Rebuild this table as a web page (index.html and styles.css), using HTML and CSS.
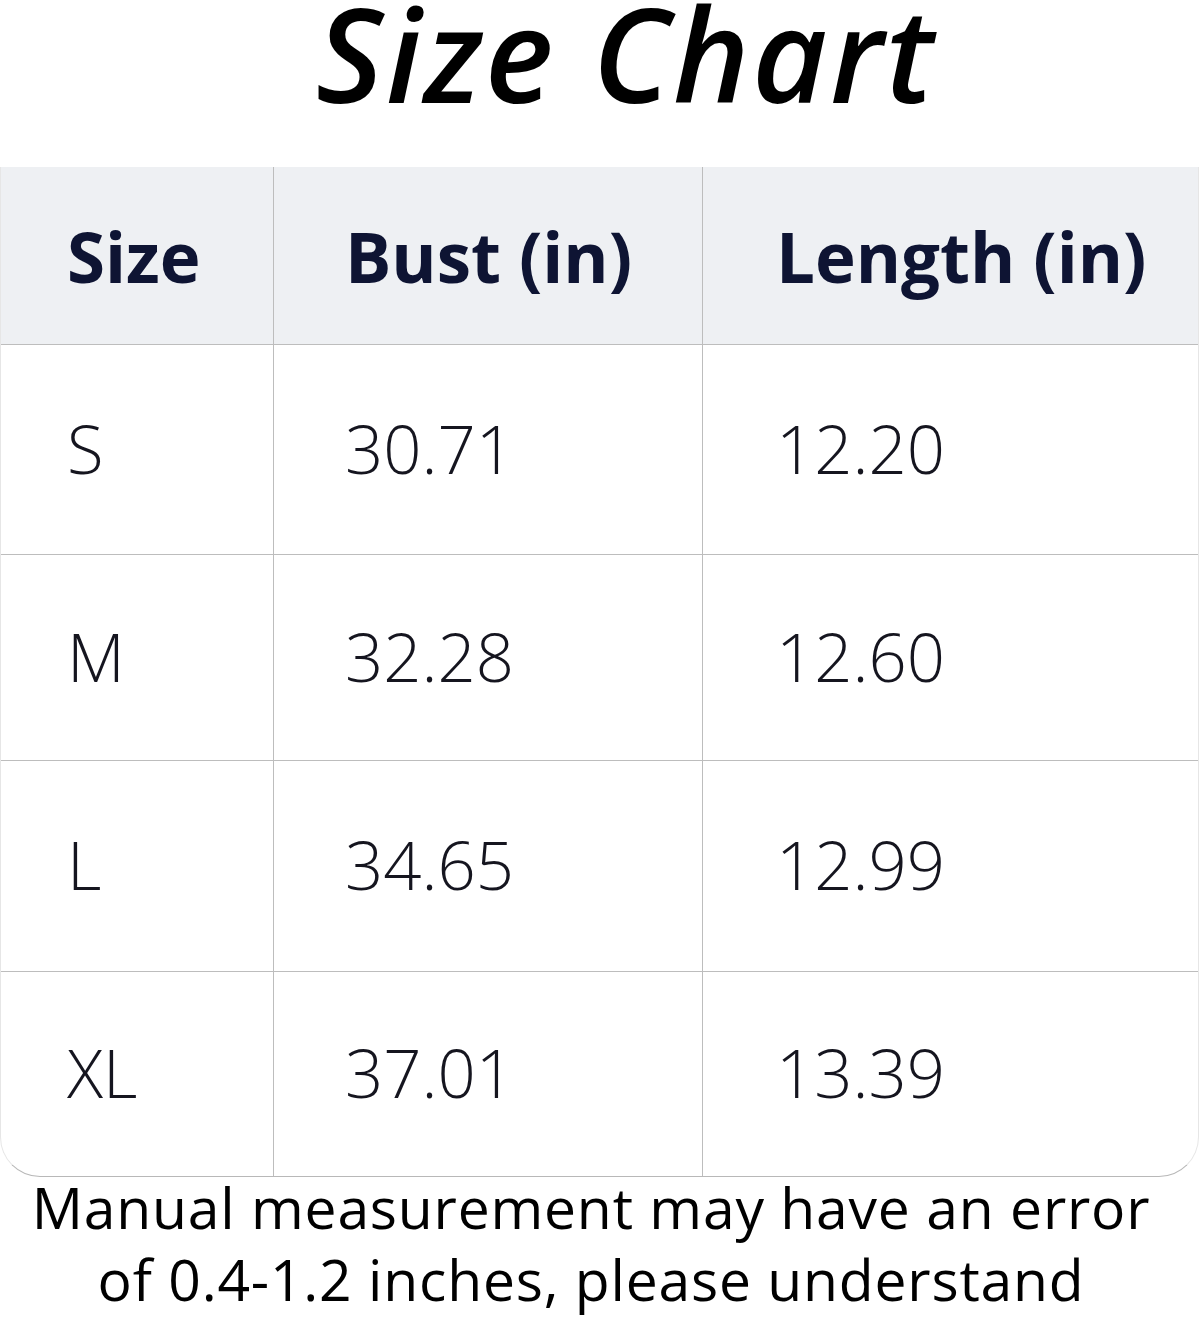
FILE: index.html
```html
<!DOCTYPE html>
<html lang="en">
<head>
<meta charset="utf-8">
<title>Size Chart</title>
<link rel="stylesheet" href="styles.css">
</head>
<body>
<div class="page">
  <h1 class="title">Size Chart</h1>
  <div class="chart">
    <div class="row head">
      <div class="cell c1">Size</div>
      <div class="cell c2">Bust (in)</div>
      <div class="cell c3">Length (in)</div>
    </div>
    <div class="row r1">
      <div class="cell c1">S</div>
      <div class="cell c2">30.71</div>
      <div class="cell c3">12.20</div>
    </div>
    <div class="row r2">
      <div class="cell c1">M</div>
      <div class="cell c2">32.28</div>
      <div class="cell c3">12.60</div>
    </div>
    <div class="row r3">
      <div class="cell c1">L</div>
      <div class="cell c2">34.65</div>
      <div class="cell c3">12.99</div>
    </div>
    <div class="row r4">
      <div class="cell c1">XL</div>
      <div class="cell c2">37.01</div>
      <div class="cell c3">13.39</div>
    </div>
  </div>
  <p class="note">Manual measurement may have an error<br>of 0.4-1.2 inches, please understand</p>
</div>
</body>
</html>
```

FILE: styles.css
```css
* { box-sizing: border-box; }
html, body { margin: 0; padding: 0; background: #ffffff; }
.page {
  width: 1200px;
  height: 1317px;
  display: flex;
  flex-direction: column;
  overflow: hidden;
}
.page > * { flex-shrink: 0; }
.title {
  height: 167px;
  margin: 0;
  padding-top: 4px;
  padding-left: 52px;
  font-family: "Open Sans", sans-serif;
  font-style: italic;
  font-weight: 600;
  font-size: 130px;
  line-height: 98px;
  text-align: center;
  color: #000;
  letter-spacing: 2.5px;
}
.chart {
  width: 1199px;
  border-left: 1px solid #e6e6e6;
  border-right: 1px solid #e6e6e6;
  border-bottom: 1px solid #b8b8b8;
  border-radius: 0 0 40px 40px;
  overflow: hidden;
}
.row {
  display: grid;
  grid-template-columns: 272px 429px 1fr;
  border-bottom: 1px solid #bdbdbd;
}
.row:last-child { border-bottom: none; }
.head { height: 178px; background: #eef0f3; }
.r1 { height: 210px; }
.r2 { height: 206px; }
.r3 { height: 211px; }
.r4 { height: 204px; }
.cell {
  display: flex;
  align-items: center;
  padding-left: 66px;
  padding-bottom: 4px;
  font-family: "Open Sans", sans-serif;
  font-weight: 350;
  font-size: 67px;
  color: #15151f;
}
.c2, .c3 { border-left: 1px solid #bdbdbd; }
.c2 { padding-left: 71px; }
.c3 { padding-left: 73px; }
.head .cell {
  font-weight: 700;
  font-size: 69px;
  color: #0e1433;
  padding-bottom: 0;
}
.note {
  margin: -6px 0 0;
  padding-right: 18px;
  font-family: "Open Sans", sans-serif;
  font-size: 57px;
  line-height: 72px;
  letter-spacing: 0.8px;
  text-align: center;
  color: #000;
}
```
